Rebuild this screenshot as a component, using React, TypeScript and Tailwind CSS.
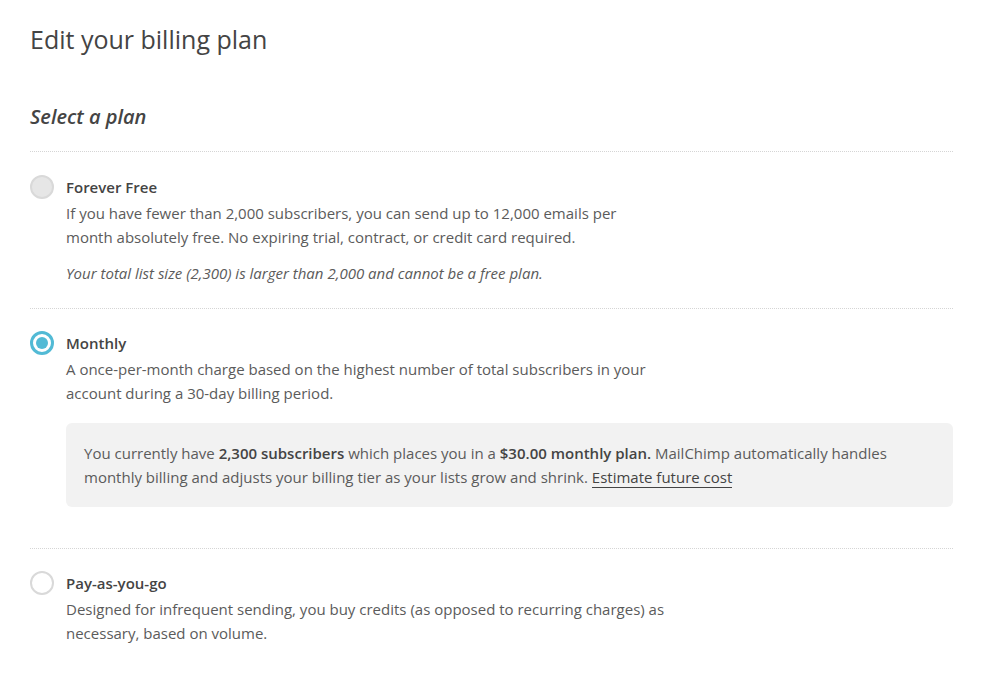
import React, { useState } from "react";

type Plan = "free" | "monthly" | "payg";

function Radio({ checked, disabled }: { checked: boolean; disabled?: boolean }) {
  if (checked) {
    return (
      <span className="flex h-6 w-6 shrink-0 items-center justify-center rounded-full border-[3px] border-[#52bad5] bg-white">
        <span className="h-3 w-3 rounded-full bg-[#52bad5]" />
      </span>
    );
  }
  return (
    <span
      className={`block h-6 w-6 shrink-0 rounded-full border-2 border-[#d9d9d9] ${
        disabled ? "bg-[#e6e6e6]" : "bg-white"
      }`}
    />
  );
}

export default function App() {
  const [plan, setPlan] = useState<Plan>("monthly");

  return (
    <div className="min-h-screen bg-white pl-[30px] pr-[28px] pt-[21px] font-['Open_Sans',sans-serif] text-[15px] leading-6 text-[#5b5b5b]">
      <h1 className="text-[25px] leading-9 font-normal text-[#444]">Edit your billing plan</h1>

      <h2 className="mt-[44px] text-[20px] leading-8 italic font-semibold text-[#444]">Select a plan</h2>

      <div className="mt-[18px] border-t border-dotted border-[#d5d5d5] pt-[23px] pb-[23px]">
        <div className="flex gap-3">
          <Radio checked={false} disabled />
          <div>
            <div className="font-semibold text-[#444]">Forever Free</div>
            <p className="mt-[2px] max-w-[580px]">
              If you have fewer than 2,000 subscribers, you can send up to 12,000 emails per month absolutely free. No expiring trial, contract, or credit card required.
            </p>
            <p className="mt-3 italic">Your total list size (2,300) is larger than 2,000 and cannot be a free plan.</p>
          </div>
        </div>
      </div>

      <div className="border-t border-dotted border-[#d5d5d5] pt-[22px] pb-[41px]">
        <label className="flex cursor-pointer gap-3" onClick={() => setPlan("monthly")}>
          <Radio checked={plan === "monthly"} />
          <div className="flex-1">
            <div className="font-semibold text-[#444]">Monthly</div>
            <p className="mt-[2px] max-w-[590px]">
              A once-per-month charge based on the highest number of total subscribers in your account during a 30-day billing period.
            </p>
            <div className="mt-[18px] rounded-md bg-[#f2f2f2] px-[18px] py-[18px]">
              You currently have <strong className="font-semibold text-[#444]">2,300 subscribers</strong> which places you in a{" "}
              <strong className="font-semibold text-[#444]">$30.00 monthly plan.</strong> MailChimp automatically handles monthly billing and adjusts your billing tier as your lists grow and shrink.{" "}
              <a href="#" className="border-b border-[#444] text-[#444]">Estimate future cost</a>
            </div>
          </div>
        </label>
      </div>

      <div className="border-t border-dotted border-[#d5d5d5] pt-[22px] pb-6">
        <label className="flex cursor-pointer gap-3" onClick={() => setPlan("payg")}>
          <Radio checked={plan === "payg"} />
          <div>
            <div className="font-semibold text-[#444]">Pay-as-you-go</div>
            <p className="mt-[2px] max-w-[610px]">
              Designed for infrequent sending, you buy credits (as opposed to recurring charges) as necessary, based on volume.
            </p>
          </div>
        </label>
      </div>
    </div>
  );
}
